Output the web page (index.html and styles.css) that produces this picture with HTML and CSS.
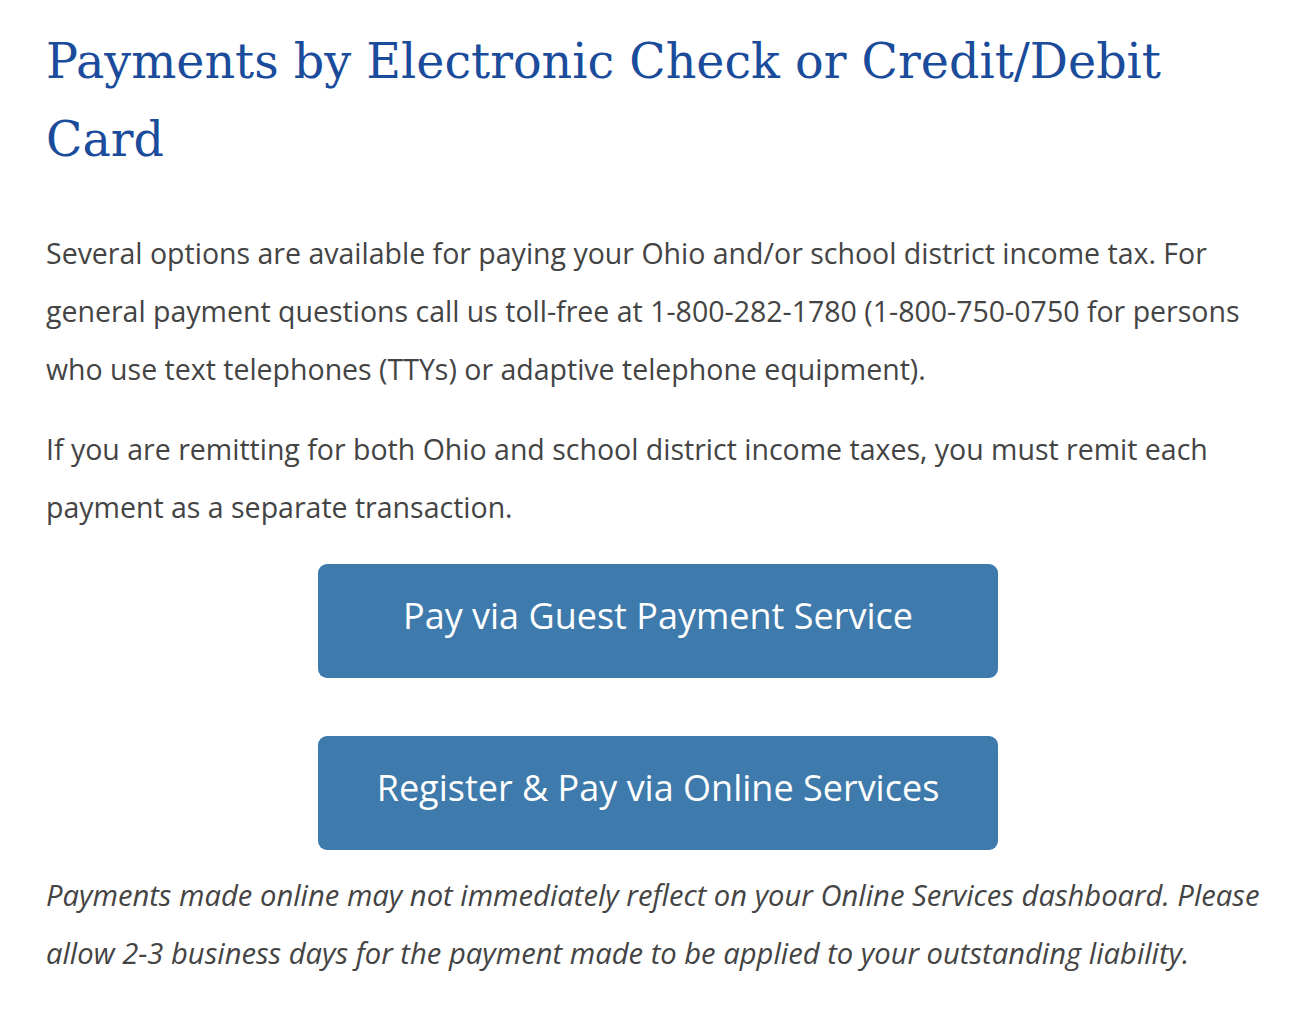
FILE: index.html
```html
<!DOCTYPE html>
<html lang="en">
<head>
    <meta charset="UTF-8">
    <meta name="viewport" content="width=device-width, initial-scale=1.0">
    <title>Payments by Electronic Check or Credit/Debit Card</title>
    <link rel="stylesheet" href="styles.css">
</head>
<body>
    <main class="content">
        <h1 class="page-title">Payments by Electronic Check or Credit/Debit Card</h1>

        <p>Several options are available for paying your Ohio and/or school district income tax. For general payment questions call us toll-free at 1-800-282-1780 (1-800-750-0750 for persons who use text telephones (TTYs) or adaptive telephone equipment).</p>

        <p>If you are remitting for both Ohio and school district income taxes, you must remit each payment as a separate transaction.</p>

        <div class="button-container">
            <a class="button" href="#">Pay via Guest Payment Service</a>
            <a class="button" href="#">Register &amp; Pay via Online Services</a>
        </div>

        <p class="note">Payments made online may not immediately reflect on your Online Services dashboard. Please allow 2-3 business days for the payment made to be applied to your outstanding liability.</p>
    </main>
</body>
</html>
```

FILE: styles.css
```css
body {
    font-family: "Open Sans", "Lato", sans-serif;
    margin: 0;
    padding: 0;
    background: #fff;
    color: #444;
}

.content {
    width: 1224px;
    padding: 23px 0 0 46px;
}

.page-title {
    max-width: 1200px;
    font-family: "DejaVu Serif", serif;
    font-weight: normal;
    font-size: 47.6px;
    line-height: 78px;
    color: #1a4c9b;
    margin: 0 0 45px 0;
}

p {
    font-size: 28.5px;
    line-height: 58px;
    margin: 0 0 22px 0;
}

.button-container {
    display: flex;
    flex-direction: column;
    align-items: center;
    gap: 58px;
    margin: 28px 0 16px 0;
}

.button {
    display: flex;
    align-items: center;
    justify-content: center;
    box-sizing: border-box;
    width: 680px;
    height: 114px;
    padding-bottom: 12px;
    background-color: #3e7aab;
    color: #fff;
    font-size: 36px;
    text-decoration: none;
    border-radius: 9px;
}

.note {
    font-style: italic;
    font-size: 29.2px;
    margin: 0;
}
```
